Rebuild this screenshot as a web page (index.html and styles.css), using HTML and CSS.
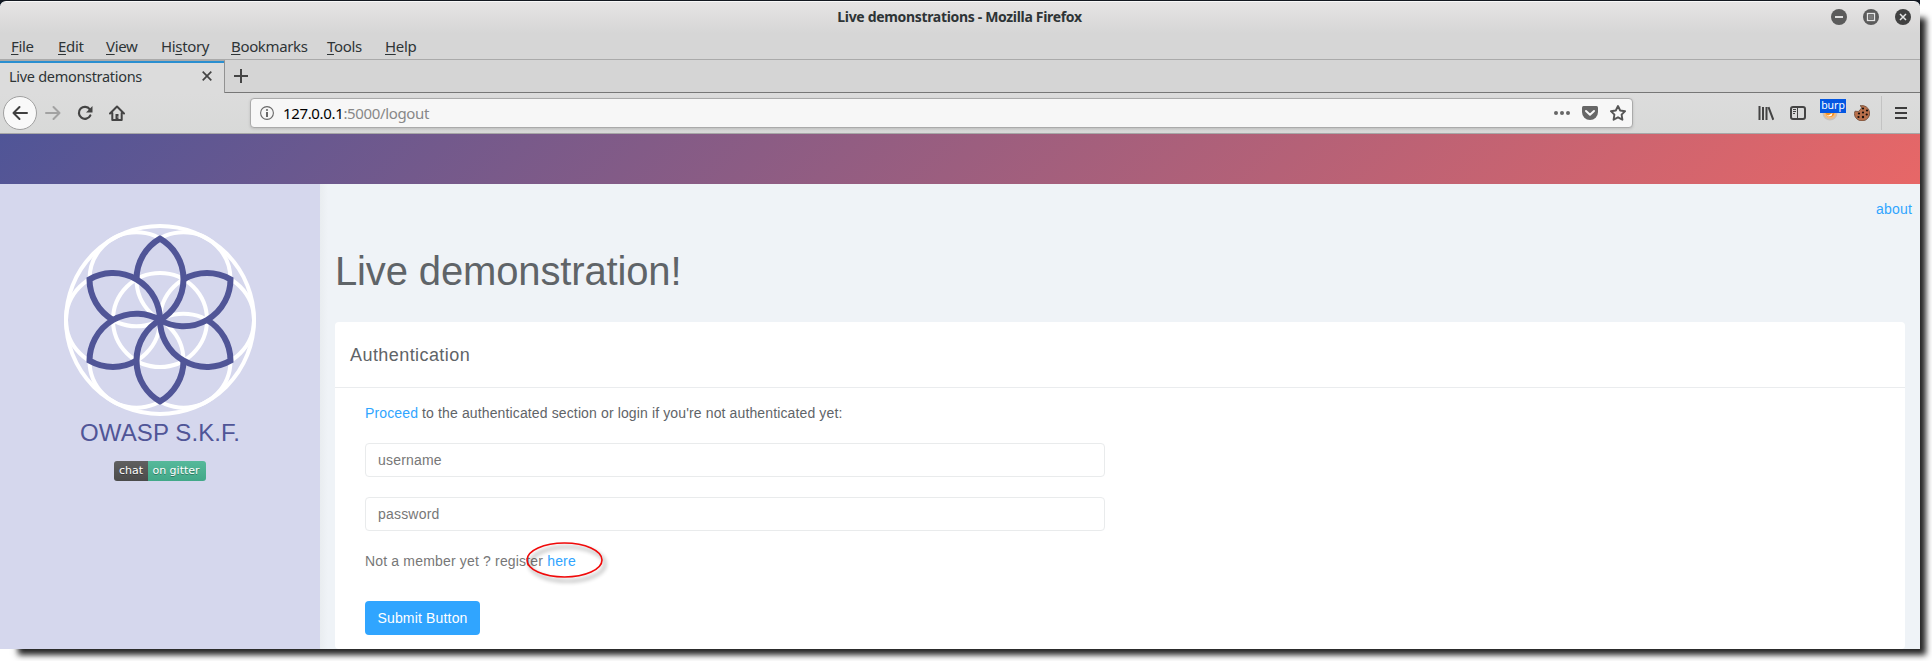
FILE: index.html
```html
<!DOCTYPE html>
<html lang="en">
<head>
<meta charset="utf-8">
<title>Live demonstrations</title>
<link rel="stylesheet" href="styles.css">
</head>
<body>
<div class="desktop">
<div class="window">
  <header class="titlebar">
    <span class="title">Live demonstrations - Mozilla Firefox</span>
    <div class="controls">
      <svg width="16" height="16" viewBox="0 0 16 16"><circle cx="8" cy="8" r="8" fill="#5b5b5b"/><path d="M4 8h8" stroke="#dfdfdf" stroke-width="2"/></svg>
      <svg width="16" height="16" viewBox="0 0 16 16"><circle cx="8" cy="8" r="8" fill="#5b5b5b"/><rect x="4.500" y="4.500" width="7" height="7" fill="none" stroke="#e4e4e4" stroke-width="1.300"/><rect x="6" y="6" width="4" height="4" fill="#7a7a7a"/></svg>
      <svg width="16" height="16" viewBox="0 0 16 16"><circle cx="8" cy="8" r="8" fill="#414141"/><path d="M5 5l6 6M11 5l-6 6" stroke="#e5e5e5" stroke-width="1.500"/></svg>
    </div>
  </header>
  <nav class="menubar">
    <span class="m-file"><u>F</u>ile</span><span class="m-edit"><u>E</u>dit</span><span class="m-view"><u>V</u>iew</span><span class="m-history">Hi<u>s</u>tory</span><span class="m-book"><u>B</u>ookmarks</span><span class="m-tools"><u>T</u>ools</span><span class="m-help"><u>H</u>elp</span>
  </nav>
  <div class="tabstrip">
    <div class="tab"><span>Live demonstrations</span>
      <svg width="10" height="10" viewBox="0 0 10 10"><path d="M.7.7l8.600 8.600M9.300.7L.7 9.300" stroke="#444" stroke-width="1.700"/></svg>
    </div>
    <svg class="plus" width="14" height="14" viewBox="0 0 14 14"><path d="M7 0v14M0 7h14" stroke="#444" stroke-width="2"/></svg>
  </div>
  <div class="toolbar">
    <div class="back"><svg width="16" height="16" viewBox="0 0 16 16" fill="none" stroke="#3f3f3f" stroke-width="2" stroke-linecap="round" stroke-linejoin="round"><path d="M15 8H1.500M7.500 2L1.500 8l6 6"/></svg></div>
    <svg class="fwd" width="16" height="16" viewBox="0 0 16 16" fill="none" stroke="#a2a2a2" stroke-width="2" stroke-linecap="round" stroke-linejoin="round"><path d="M1 8h13.500M8.500 2l6 6-6 6"/></svg>
    <svg class="reload" width="16" height="16" viewBox="0 0 16 16"><path d="M12.800 4.300A6 6 0 1 0 13.300 10.500" fill="none" stroke="#444" stroke-width="2.200" stroke-linecap="round"/><path d="M15.500 1v6.500H9z" fill="#444"/></svg>
    <svg class="home" width="16" height="16" viewBox="0 0 16 16"><path d="M1 8.500L8 1.500l7 7M3.300 8v7h9.400V8" fill="none" stroke="#444" stroke-width="2" stroke-linecap="round" stroke-linejoin="round"/><path d="M6.500 9h3v6h-3z" fill="#444"/><path d="M8.500 11.500h1v1h-1z" fill="#ddd"/></svg>
    <div class="urlbar">
      <svg width="14" height="14" viewBox="0 0 14 14"><circle cx="7" cy="7" r="6.400" fill="none" stroke="#686868" stroke-width="1.100"/><path d="M7 6v5" stroke="#686868" stroke-width="2"/><circle cx="7" cy="4" r="1.100" fill="#686868"/></svg>
      <span class="url"><b>127.0.0.1</b>:5000/logout</span>
      <svg class="dots" width="16" height="16" viewBox="0 0 16 16" fill="#666"><circle cx="2" cy="8" r="2"/><circle cx="8" cy="8" r="2"/><circle cx="14" cy="8" r="2"/></svg>
      <svg class="pocket" width="16" height="16" viewBox="0 0 16 16"><path d="M1.500 1h13Q16 1 16 2.500V7a8 8 0 0 1-16 0V2.500Q0 1 1.500 1z" fill="#666"/><path d="M4 6l4 3.800L12 6" fill="none" stroke="#f6f6f6" stroke-width="2" stroke-linecap="round" stroke-linejoin="round"/></svg>
      <svg width="16" height="16" viewBox="0 0 16 16"><path d="M8 1l2.200 4.500 4.900.7-3.500 3.500.8 5L8 12.300l-4.400 2.400.8-5L.9 6.200l4.900-.7z" fill="none" stroke="#555" stroke-width="1.900" stroke-linejoin="round"/></svg>
    </div>
    <div class="tools">
      <svg width="16" height="16" viewBox="0 0 16 16" stroke="#444" stroke-width="2"><path d="M1.500 1v14M5 2v13M8.500 2v13M10.500 2.200l4.800 12.600" fill="none"/></svg>
      <svg width="16" height="16" viewBox="0 0 16 16" fill="none" stroke="#444"><rect x="1" y="2" width="14" height="12" rx="2" stroke-width="2"/><path d="M7.500 2v12"/><path d="M3 4.500h3M3 6.500h3M3 8.500h2" stroke-width="1"/></svg>
      <div class="burp"><svg width="16" height="16" viewBox="0 0 16 16"><circle cx="8" cy="8" r="7.500" fill="#c8c2bb"/><circle cx="8" cy="7.500" r="6.500" fill="#f6bd80"/><circle cx="8" cy="7.500" r="4.500" fill="#f49324"/><path d="M4 9.500l2.500 1 4-2.500-1 3-3 .5z" fill="#fff"/></svg><span>burp</span></div>
      <svg width="16" height="16" viewBox="0 0 16 16"><path d="M6 .8l1 .2.500 2-1.500 2-1.700 1.500L1 6.200.3 8.500A7.700 7.700 0 1 0 6 .8z" fill="#b9704b" stroke="#6f4b37" stroke-width=".8"/><g fill="#17100d"><circle cx="9" cy="3.500" r="1.100"/><circle cx="13" cy="5.500" r="1.100"/><circle cx="9" cy="7.500" r="1.100"/><circle cx="5" cy="8.500" r="1.100"/><circle cx="12.700" cy="9.500" r="1.100"/><circle cx="4.500" cy="12" r="1.100"/><circle cx="9" cy="12" r="1.200"/></g></svg>
      <i class="sep"></i>
      <svg class="burger" width="12" height="12" viewBox="0 0 12 12"><path d="M0 1h12M0 6h12M0 11h12" stroke="#3c3c3c" stroke-width="2"/></svg>
    </div>
  </div>
  <div class="banner"></div>
  <div class="page">
    <aside class="sidebar">
      <svg class="logo" width="192" height="192" viewBox="-96 -96 192 192" fill="none">
        <g stroke="#fff" stroke-width="4">
          <circle r="94"/><circle r="47"/>
          <circle cx="47" r="47"/><circle cx="-47" r="47"/>
          <circle cx="23.500" cy="-40.700" r="47"/><circle cx="-23.500" cy="-40.700" r="47"/>
          <circle cx="23.500" cy="40.700" r="47"/><circle cx="-23.500" cy="40.700" r="47"/>
        </g>
        <defs><path id="petal" d="M-23.500-40.700A47 47 0 0 1 0-81.400A47 47 0 0 1 0 0"/></defs>
        <g stroke="#505597" stroke-width="6">
          <use href="#petal"/><use href="#petal" transform="rotate(60)"/><use href="#petal" transform="rotate(120)"/><use href="#petal" transform="rotate(180)"/><use href="#petal" transform="rotate(240)"/><use href="#petal" transform="rotate(300)"/>
        </g>
      </svg>
      <div class="brand">OWASP S.K.F.</div>
      <div class="badge"><span class="chat">chat</span><span class="gitter">on gitter</span></div>
    </aside>
    <main class="main">
      <a class="about">about</a>
      <h1>Live demonstration!</h1>
      <section class="card">
        <h2>Authentication</h2>
        <div class="body">
          <p class="intro"><a>Proceed</a> to the authenticated section or login if you're not authenticated yet:</p>
          <input type="text" placeholder="username">
          <input type="text" placeholder="password">
          <p class="member">Not a member yet ? register <span class="mark"><a>here</a><svg class="ring" width="90" height="50" viewBox="0 0 90 50"><ellipse cx="43.500" cy="22" rx="37.500" ry="17" fill="none" stroke="#f00a0a" stroke-width="1.600"/></svg></span></p>
          <button>Submit Button</button>
        </div>
      </section>
    </main>
  </div>
</div>
</div>
</body>
</html>
```
FILE: styles.css
```css
* { box-sizing: border-box; }
body { margin: 0; background: #fff; width: 1932px; height: 661px; overflow: hidden; font-family: "Liberation Sans", Arial, sans-serif; }
svg { display: block; flex: none; }
.desktop { width: 1920px; height: 649px; background: linear-gradient(#14181f, #0b1a2b 6px, #fff 6px); box-shadow: 12px 12px 6px -6px #262626; }
.window { height: 649px; padding-top: 1px; display: flex; flex-direction: column; overflow: hidden; }
.titlebar { height: 32px; flex: none; display: flex; align-items: center; position: relative; background: linear-gradient(#e6e4e4, #d6d6d6); border-top: 1px solid #f8f8f8; border-radius: 6px 6px 0 0; font-family: "Noto Sans", sans-serif; }
.title { flex: 1; text-align: center; font-size: 14px; font-weight: 700; color: #2e3436; letter-spacing: -.33px; padding: 0 1px 2px 0; }
.controls { position: absolute; right: 9px; top: 7px; display: flex; gap: 16px; }
.menubar { height: 26px; flex: none; display: flex; background: #d6d6d6; font: 15px/26px "Noto Sans", sans-serif; color: #2e3436; padding-left: 11px; }
.menubar u { text-underline-offset: 2px; text-decoration-thickness: 1px; }
.menubar span { letter-spacing: -.35px; }
.m-file { width: 47px; } .m-edit { width: 48px; } .m-view { width: 55px; } .m-history { width: 70px; } .m-book { width: 96px; } .m-tools { width: 58px; }
.tabstrip { height: 34px; flex: none; display: flex; align-items: flex-start; background: linear-gradient(#aaa 1px, #d5d5d5 1px, #d5d5d5 33px, #777 33px); }
.tab { width: 225px; height: 33px; margin-top: 1px; border-top: 1px solid #aaa; border-right: 1px solid #929292; background: linear-gradient(#2a8fd0 2px, #dcdcdc 2px); display: flex; align-items: center; justify-content: space-between; padding: 0 12px 2px 9px; font: 14.500px/20px "Noto Sans", sans-serif; color: #2e3436; letter-spacing: -.3px; }
.plus { margin: 10px 0 0 9px; }
.toolbar { height: 41px; flex: none; display: flex; align-items: center; background: linear-gradient(#dcdcdc, #d8d9d8); border-bottom: 1px solid #a7a7a7; padding: 0 13px 0 3px; }
.back { width: 34px; height: 34px; flex: none; border: 1px solid #a0a0a0; border-radius: 50%; background: #f9f9f9; display: grid; place-items: center; }
.fwd { margin-left: 8px; } .reload { margin-left: 16px; } .home { margin-left: 16px; }
.urlbar { width: 1383px; height: 30px; flex: none; margin-left: 125px; border: 1px solid #aaa; border-radius: 4px; background: #f7f7f7; display: flex; align-items: center; padding: 0 6px 0 9px; box-shadow: 0 1px 3px #0002; }
.url { flex: 1; margin-left: 9px; font: 15px/24px "Noto Sans", sans-serif; color: #888; letter-spacing: -.35px; }
.url b { font-weight: 400; color: #000; }
.pocket { margin: 0 12px; }
.tools { margin-left: auto; display: flex; align-items: center; gap: 16px; }
.burp { position: relative; }
.burp span { position: absolute; left: -2px; top: -6px; width: 26px; height: 14px; background: #0457e2; color: #fff; font: 10.500px/13px "Noto Sans", sans-serif; text-align: center; }
.sep { width: 1px; height: 34px; background: #c3c3c3; margin-left: -5px; }
.burger { margin-left: -3px; }
.banner { height: 50px; flex: none; background: linear-gradient(135deg, #505597, #e76767); }
.page { flex: 1; min-height: 0; display: flex; background: #eff3f6; }
.sidebar { width: 320px; background: #d5d7ed; display: flex; flex-direction: column; align-items: center; padding-top: 40px; }
.brand { font-size: 24px; line-height: 28px; color: #505597; margin-top: 3px; letter-spacing: .1px; }
.badge { display: flex; margin-top: 14px; height: 20px; font: 11px/20px "DejaVu Sans", sans-serif; color: #fff; border-radius: 3px; overflow: hidden; text-shadow: 0 1px 0 #0005; }
.chat { width: 34px; text-align: center; background: linear-gradient(#606060, #4b4b4b); }
.gitter { width: 58px; padding-right: 2px; text-align: center; background: linear-gradient(#56b99a, #42a888); }
.main { flex: 1; padding: 0 15px; display: flex; flex-direction: column; background: linear-gradient(90deg, #e9edf0, #eff3f7 8px); color: #5f6468; }
a { color: #30a5ff; }
.about { align-self: flex-end; margin: 15px -7px 0 0; font-size: 14px; line-height: 20px; letter-spacing: .2px; }
h1 { margin: 28px 0 0; font-size: 40px; line-height: 48px; font-weight: 400; letter-spacing: -.14px; color: #5f6468; }
.card { margin-top: 27px; height: 327px; background: #fff; border-radius: 4px; }
h2 { margin: 0; height: 66px; border-bottom: 1px solid #eaecee; padding-left: 15px; font-size: 18px; line-height: 66px; font-weight: 400; letter-spacing: .43px; }
.body { padding: 15px 30px 0; font-size: 14px; line-height: 20px; letter-spacing: .13px; display: flex; flex-direction: column; align-items: flex-start; }
p { margin: 0; }
input { width: 740px; height: 34px; margin: 20px 0 0; border: 1px solid #e9ebec; border-radius: 4px; padding: 0 12px; font: 14px "Liberation Sans", sans-serif; letter-spacing: .2px; }
input::placeholder { color: #777; }
.member { margin-top: 20px; color: #777; letter-spacing: .17px; }
.mark { position: relative; }
.ring { position: absolute; left: -26px; top: -15px; filter: drop-shadow(3px 4px 2px #0007); }
button { margin-top: 30px; width: 115px; height: 34px; border: 0; border-radius: 4px; background: #30a5ff; color: #fff; font: 14px "Liberation Sans", sans-serif; letter-spacing: .17px; padding: 0; }
```
